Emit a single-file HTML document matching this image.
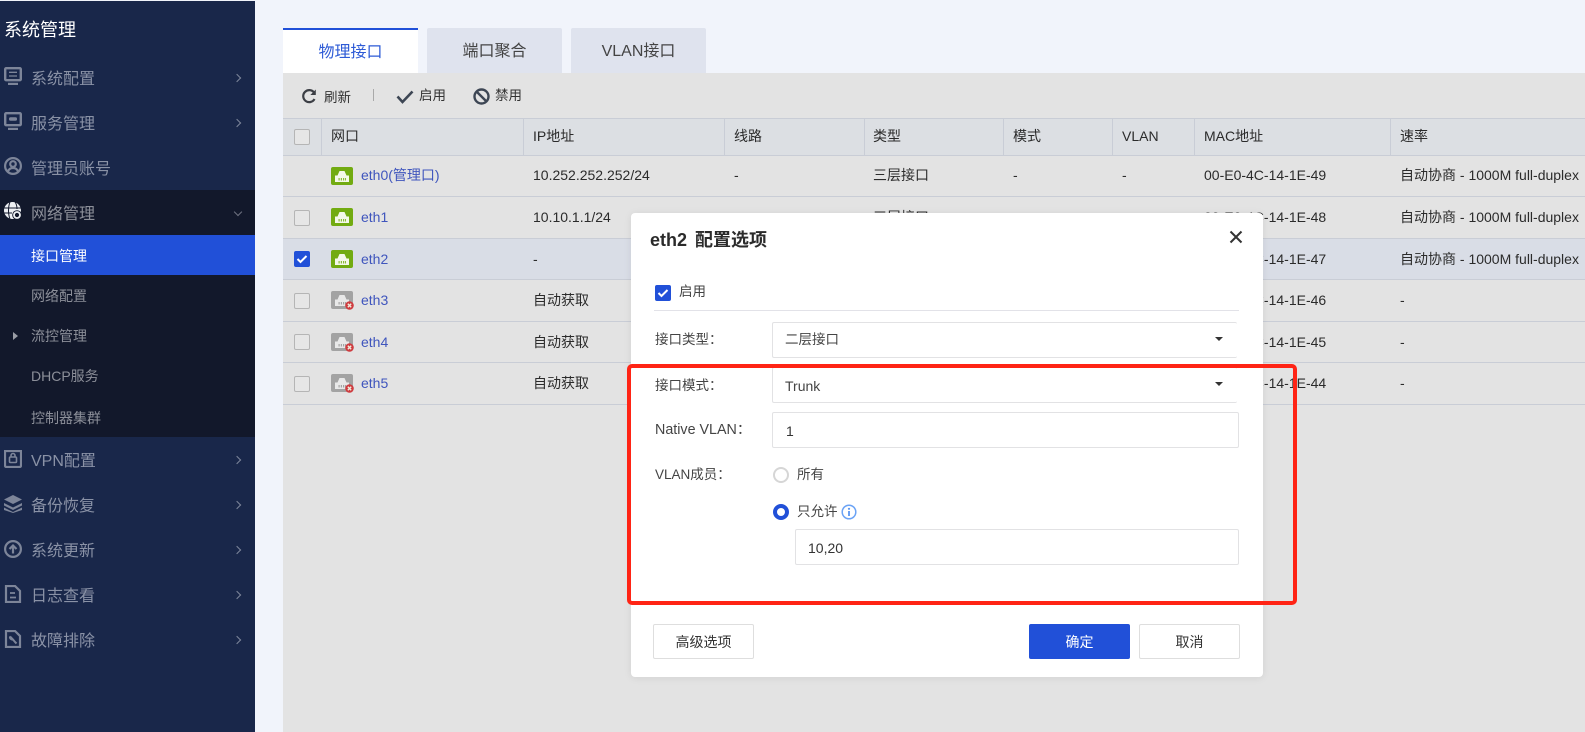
<!DOCTYPE html>
<html lang="zh"><head><meta charset="utf-8"><title>系统管理</title>
<style>
*{box-sizing:border-box}
html,body{margin:0;padding:0;width:1585px;height:732px;overflow:hidden;background:#f1f4fb;font-family:"Liberation Sans","Noto Sans CJK SC",sans-serif;font-size:14px;color:#333}
.a{position:absolute;white-space:nowrap}
.t{position:absolute;white-space:nowrap;height:20px;line-height:20px}
.m{color:#8a92a6;font-size:16px;left:31px}
.s{color:#8c8f99;font-size:14px;left:31px}
.ic{position:absolute;left:4px;width:18px;height:18px}
.ch{position:absolute;left:234px;width:6px;height:6px;border-top:1px solid #7e869b;border-right:1px solid #7e869b;transform:rotate(45deg)}
.line{position:absolute;left:283px;right:0;height:1px;background:#c9cdd6}
.vl{position:absolute;top:118px;height:37px;width:1px;background:#c9cdd6}
.cb{position:absolute;left:294px;width:16px;height:16px;border:1px solid #b5b5b5;border-radius:2px;background:#e6e6e6}
.eth{color:#3f55bd}
.c{color:#2b2b2b}
.lb{color:#444}
.box{position:absolute;background:#fff;border:1px solid #e2e2e4;border-radius:2px}
.btn{position:absolute;top:624px;height:35px;width:101px;text-align:center;line-height:35px;border:1px solid #dedede;background:#fff;color:#333;border-radius:2px}
.arr{position:absolute;left:1215px;width:0;height:0;border-left:4px solid transparent;border-right:4px solid transparent;border-top:4.5px solid #333}
</style></head><body>
<svg width="0" height="0" style="position:absolute">
<symbol id="up" viewBox="0 0 22 18"><rect width="22" height="18" rx="2" fill="#72ab11"/><path d="M4 15V8.500h2.500L8.500 4h5l2 4.500H18V15z" fill="#f4f8ea"/><path d="M7.500 11h1.200v2.500H7.500zM9.800 11H11v2.500H9.800zM12 11h1.200v2.500H12zM14 11h1v2.500h-1z" fill="#8dbb3a"/></symbol>
<symbol id="down" viewBox="0 0 24 20"><rect width="22" height="18" rx="2" fill="#a3a3a3"/><path d="M4 15V8.500h2.500L8.500 4h5l2 4.500H18V15z" fill="#e8e8e8"/><path d="M7.500 11h1.200v2.500H7.500zM9.800 11H11v2.500H9.800zM12 11h1.200v2.500H12zM14 11h1v2.500h-1z" fill="#a3a3a3"/><circle cx="18.500" cy="14.500" r="4.300" fill="#cf3b3f"/><path d="M16.800 12.800l3.400 3.400M20.200 12.800l-3.400 3.400" stroke="#eed" stroke-width="1.400"/></symbol>
</svg>

<!-- sidebar -->
<div class="a" style="left:0;top:1px;width:255px;height:731px;background:#19274a"></div>
<div class="a" style="left:0;top:190px;width:255px;height:247px;background:#12182b"></div>
<div class="a" style="left:0;top:235px;width:255px;height:40px;background:#2150d8"></div>
<div class="a" style="left:4px;top:17px;color:#fff;font-size:18px;line-height:26px">系统管理</div>

<svg class="ic" style="top:67px" viewBox="0 0 18 18" fill="none" stroke="#7d8599" stroke-width="2.400"><rect x="1.200" y="1.200" width="15.600" height="12" rx="1"/><path d="M4 17h10"/><path d="M5 5.300h8M13 9H5" stroke-width="1.300"/></svg>
<div class="t m" style="top:70px">系统配置</div><div class="ch" style="top:75px"></div>
<svg class="ic" style="top:112px" viewBox="0 0 18 18" fill="none" stroke="#7d8599" stroke-width="2.400"><rect x="1.200" y="1.200" width="15.600" height="12" rx="1"/><path d="M4 17h10"/><rect x="5" y="5.300" width="8" height="3.400" rx="1.500" fill="#7d8599" stroke="none"/></svg>
<div class="t m" style="top:115px">服务管理</div><div class="ch" style="top:120px"></div>
<svg class="ic" style="top:157px" viewBox="0 0 18 18" fill="none" stroke="#7d8599" stroke-width="2.200"><circle cx="9" cy="9" r="7.900"/><circle cx="9" cy="7" r="2.800"/><path d="M4 14.500c1-3 3-3.500 5-3.500s4 .5 5 3.500"/></svg>
<div class="t m" style="top:160px">管理员账号</div>
<svg class="ic" style="top:202px" viewBox="0 0 18 18" fill="none"><circle cx="8.500" cy="8.500" r="8.500" fill="#eef0f4"/><path d="M0 6h17M0 11h8M6 0c-2 5-2 12 0 17M11 0c1.500 2 2 4 2 7" stroke="#12182b" stroke-width="1"/><circle cx="13" cy="13" r="4.800" fill="#12182b"/><circle cx="13" cy="13" r="3" stroke="#eef0f4" stroke-width="1.800"/></svg>
<div class="t m" style="top:205px;color:#8c8f99">网络管理</div>
<div class="ch" style="top:209px;left:235px;transform:rotate(135deg);border-color:#6e7280"></div>

<div class="t s" style="top:246px;color:#fff">接口管理</div>
<div class="t s" style="top:286px">网络配置</div>
<div class="a" style="left:13px;top:332px;border-left:5px solid #9a9da6;border-top:4px solid transparent;border-bottom:4px solid transparent"></div>
<div class="t s" style="top:326px">流控管理</div>
<div class="t s" style="top:366px">DHCP服务</div>
<div class="t s" style="top:408px">控制器集群</div>

<svg class="ic" style="top:450px" viewBox="0 0 18 18" fill="none" stroke="#7d8599" stroke-width="2.200"><path d="M1 1h16v14.500c0 1-.5 1.500-1.500 1.500h-13C1.500 17 1 16.500 1 15.500z"/><rect x="5.500" y="7" width="7" height="5.500" rx="1" stroke-width="1.600"/><path d="M7 7V5.500a2 2 0 0 1 4 0V7" stroke-width="1.600"/></svg>
<div class="t m" style="top:452px">VPN配置</div><div class="ch" style="top:457px"></div>
<svg class="ic" style="top:495px" viewBox="0 0 18 18" fill="#7d8599"><path d="M9 0l9 4.500-9 4.500-9-4.500z"/><path d="M0 8l9 4.500L18 8v2.500L9 15 0 10.500z"/><path d="M0 12.500l9 4.500 9-4.500V15l-9 3-9-3z"/></svg>
<div class="t m" style="top:497px">备份恢复</div><div class="ch" style="top:502px"></div>
<svg class="ic" style="top:540px" viewBox="0 0 18 18" fill="none" stroke="#7d8599" stroke-width="2.200"><circle cx="9" cy="9" r="7.900"/><path d="M9 13.500V6M5.500 9L9 5.500 12.500 9"/></svg>
<div class="t m" style="top:542px">系统更新</div><div class="ch" style="top:547px"></div>
<svg class="ic" style="top:585px" viewBox="0 0 18 18" fill="none" stroke="#7d8599" stroke-width="2.200"><path d="M2 1h9l5 5v11H2z"/><path d="M6 8h5M6 12.500h6" stroke-width="1.800"/></svg>
<div class="t m" style="top:587px">日志查看</div><div class="ch" style="top:592px"></div>
<svg class="ic" style="top:630px" viewBox="0 0 18 18" fill="none" stroke="#7d8599" stroke-width="2.200"><path d="M2 1h9l5 5v11H2z"/><path d="M6 6.500l3 3 2 2.500 1.500 1.500M6 6.500a2.500 2.500 0 0 0 3 3" stroke-width="2"/></svg>
<div class="t m" style="top:632px">故障排除</div><div class="ch" style="top:637px"></div>

<!-- tabs -->
<div class="a" style="left:283px;top:28px;width:135px;height:45px;background:#fff;border-top:2px solid #2150d8;text-align:center;line-height:45px;font-size:16px;color:#2e5bd6">物理接口</div>
<div class="a" style="left:427px;top:28px;width:135px;height:45px;background:#dfe3ee;border-radius:2px 2px 0 0;text-align:center;line-height:47px;font-size:16px;color:#444">端口聚合</div>
<div class="a" style="left:571px;top:28px;width:135px;height:45px;background:#dfe3ee;border-radius:2px 2px 0 0;text-align:center;line-height:47px;font-size:16px;color:#444">VLAN接口</div>

<!-- content -->
<div class="a" style="left:283px;top:73px;width:1302px;height:659px;background:#e3e3e3"></div>
<svg class="a" style="left:301px;top:88px" width="16" height="16" viewBox="0 0 16 16" fill="none"><path d="M13.500 11A6 6 0 1 1 13 4.500" stroke="#3c3f45" stroke-width="2.200"/><path d="M14.800 1.500v5.500H9.300z" fill="#3c3f45"/></svg>
<div class="t" style="left:324px;top:88px;font-size:13.500px;color:#333">刷新</div>
<div class="a" style="left:373px;top:89px;width:1px;height:12px;background:#a9a9a9"></div>
<svg class="a" style="left:396px;top:90px" width="18" height="14" viewBox="0 0 18 14" fill="none"><path d="M1.500 6.500L6.500 12 16.500 1.500" stroke="#3d4654" stroke-width="2.600"/></svg>
<div class="t" style="left:419px;top:86px;font-size:13.500px;color:#333">启用</div>
<svg class="a" style="left:473px;top:88px" width="17" height="17" viewBox="0 0 17 17" fill="none" stroke="#3d4654" stroke-width="2.400"><circle cx="8.500" cy="8.500" r="7"/><path d="M3.500 3.500l10 10"/></svg>
<div class="t" style="left:495px;top:86px;font-size:13.500px;color:#333">禁用</div>

<div class="a" style="left:283px;top:118px;width:1302px;height:37px;background:#dcdfe3"></div>
<div class="a" style="left:283px;top:238px;width:1302px;height:41px;background:#d9dde6"></div>
<div class="line" style="top:118px"></div><div class="line" style="top:155px"></div><div class="line" style="top:196px"></div><div class="line" style="top:238px"></div><div class="line" style="top:279px"></div><div class="line" style="top:321px"></div><div class="line" style="top:362px"></div><div class="line" style="top:404px"></div>
<div class="vl" style="left:321px"></div><div class="vl" style="left:523px"></div><div class="vl" style="left:724px"></div><div class="vl" style="left:864px"></div><div class="vl" style="left:1003px"></div><div class="vl" style="left:1112px"></div><div class="vl" style="left:1194px"></div><div class="vl" style="left:1390px"></div>

<div class="cb" style="top:129px"></div>
<div class="t c" style="left:331px;top:126px">网口</div>
<div class="t c" style="left:533px;top:126px">IP地址</div>
<div class="t c" style="left:734px;top:126px">线路</div>
<div class="t c" style="left:873px;top:126px">类型</div>
<div class="t c" style="left:1013px;top:126px">模式</div>
<div class="t c" style="left:1122px;top:126px">VLAN</div>
<div class="t c" style="left:1204px;top:126px">MAC地址</div>
<div class="t c" style="left:1400px;top:126px">速率</div>

<svg class="a" style="left:331px;top:167px" width="22" height="18"><use href="#up"/></svg>
<div class="t eth" style="left:361px;top:165px">eth0(管理口)</div>
<div class="t c" style="left:533px;top:165px">10.252.252.252/24</div>
<div class="t c" style="left:734px;top:165px">-</div>
<div class="t c" style="left:873px;top:165px">三层接口</div>
<div class="t c" style="left:1013px;top:165px">-</div>
<div class="t c" style="left:1122px;top:165px">-</div>
<div class="t c" style="left:1204px;top:165px">00-E0-4C-14-1E-49</div>
<div class="t c" style="left:1400px;top:165px">自动协商 - 1000M full-duplex</div>

<div class="cb" style="top:210px"></div>
<svg class="a" style="left:331px;top:208px" width="22" height="18"><use href="#up"/></svg>
<div class="t eth" style="left:361px;top:207px">eth1</div>
<div class="t c" style="left:533px;top:207px">10.10.1.1/24</div>
<div class="t c" style="left:873px;top:207px">三层接口</div>
<div class="t c" style="left:1204px;top:207px">00-E0-4C-14-1E-48</div>
<div class="t c" style="left:1400px;top:207px">自动协商 - 1000M full-duplex</div>

<div class="cb" style="top:251px;background:#2150d8;border-color:#2150d8"><svg width="14" height="14" viewBox="0 0 14 14" style="display:block" fill="none"><path d="M2.500 7l3 3 6-6" stroke="#fff" stroke-width="2"/></svg></div>
<svg class="a" style="left:331px;top:250px" width="22" height="18"><use href="#up"/></svg>
<div class="t eth" style="left:361px;top:249px">eth2</div>
<div class="t c" style="left:533px;top:249px">-</div>
<div class="t c" style="left:1204px;top:249px">00-E0-4C-14-1E-47</div>
<div class="t c" style="left:1400px;top:249px">自动协商 - 1000M full-duplex</div>

<div class="cb" style="top:293px"></div>
<svg class="a" style="left:331px;top:291px" width="24" height="20"><use href="#down"/></svg>
<div class="t eth" style="left:361px;top:290px">eth3</div>
<div class="t c" style="left:533px;top:290px">自动获取</div>
<div class="t c" style="left:1204px;top:290px">00-E0-4C-14-1E-46</div>
<div class="t c" style="left:1400px;top:290px">-</div>

<div class="cb" style="top:334px"></div>
<svg class="a" style="left:331px;top:333px" width="24" height="20"><use href="#down"/></svg>
<div class="t eth" style="left:361px;top:332px">eth4</div>
<div class="t c" style="left:533px;top:332px">自动获取</div>
<div class="t c" style="left:1204px;top:332px">00-E0-4C-14-1E-45</div>
<div class="t c" style="left:1400px;top:332px">-</div>

<div class="cb" style="top:376px"></div>
<svg class="a" style="left:331px;top:374px" width="24" height="20"><use href="#down"/></svg>
<div class="t eth" style="left:361px;top:373px">eth5</div>
<div class="t c" style="left:533px;top:373px">自动获取</div>
<div class="t c" style="left:1204px;top:373px">00-E0-4C-14-1E-44</div>
<div class="t c" style="left:1400px;top:373px">-</div>

<!-- modal -->
<div class="a" style="left:631px;top:213px;width:632px;height:464px;background:#fff;border-radius:4px;box-shadow:0 1px 8px rgba(0,0,0,.08)"></div>
<div class="a" style="left:650px;top:227px;font-size:18px;font-weight:bold;color:#2b2b2b;line-height:26px;word-spacing:3px">eth2 配置选项</div>
<svg class="a" style="left:1229px;top:230px" width="14" height="14" viewBox="0 0 14 14" fill="none" stroke="#333" stroke-width="2"><path d="M1.500 1.500l11 11M12.500 1.500l-11 11"/></svg>

<div class="a" style="left:655px;top:285px;width:16px;height:16px;background:#2150d8;border-radius:2px"><svg width="16" height="16" viewBox="0 0 16 16" style="display:block" fill="none"><path d="M3.500 8l3 3 6-6" stroke="#fff" stroke-width="2"/></svg></div>
<div class="t lb" style="left:679px;top:282px;font-size:13.500px">启用</div>
<div class="a" style="left:654px;top:310px;width:585px;height:1px;background:#e2e2e8"></div>

<div class="t lb" style="left:655px;top:330px;font-size:13.500px">接口类型：</div>
<div class="box" style="left:772px;top:322px;width:465px;height:36px;border-right:0"></div>
<div class="t" style="left:785px;top:330px;font-size:13.500px;color:#444">二层接口</div>
<div class="arr" style="top:337px"></div>

<div class="t lb" style="left:655px;top:376px;font-size:13.500px">接口模式：</div>
<div class="box" style="left:772px;top:367px;width:465px;height:36px;border-right:0"></div>
<div class="t" style="left:785px;top:376px;font-size:14px;color:#444">Trunk</div>
<div class="arr" style="top:382px"></div>

<div class="t lb" style="left:655px;top:420px;font-size:14.300px">Native VLAN：</div>
<div class="box" style="left:772px;top:412px;width:467px;height:36px"></div>
<div class="t" style="left:786px;top:421px;color:#333">1</div>

<div class="t lb" style="left:655px;top:465px;font-size:13.500px">VLAN成员：</div>
<div class="a" style="left:773px;top:467px;width:16px;height:16px;border:2px solid #d6d6d6;border-radius:50%;background:#fff"></div>
<div class="t lb" style="left:797px;top:465px;font-size:13.500px">所有</div>
<div class="a" style="left:773px;top:504px;width:16px;height:16px;border:4px solid #2150d8;border-radius:50%;background:#fff"></div>
<div class="t lb" style="left:797px;top:502px;font-size:13.500px">只允许</div>
<svg class="a" style="left:841px;top:504px" width="16" height="16" viewBox="0 0 16 16" fill="none"><circle cx="8" cy="8" r="6.800" stroke="#6ba3f5" stroke-width="1.500"/><circle cx="8" cy="4.800" r="1.100" fill="#5a96f0"/><path d="M8 7v5" stroke="#5a96f0" stroke-width="1.800"/></svg>
<div class="box" style="left:795px;top:529px;width:444px;height:36px"></div>
<div class="t" style="left:808px;top:538px;color:#333">10,20</div>

<div class="btn" style="left:653px">高级选项</div>
<div class="btn" style="left:1029px;background:#2150d8;border-color:#2150d8;color:#fff">确定</div>
<div class="btn" style="left:1139px">取消</div>

<!-- annotation -->
<div class="a" style="left:627px;top:364px;width:670px;height:241px;border:4px solid #ff2415;border-radius:5px"></div>
</body></html>
